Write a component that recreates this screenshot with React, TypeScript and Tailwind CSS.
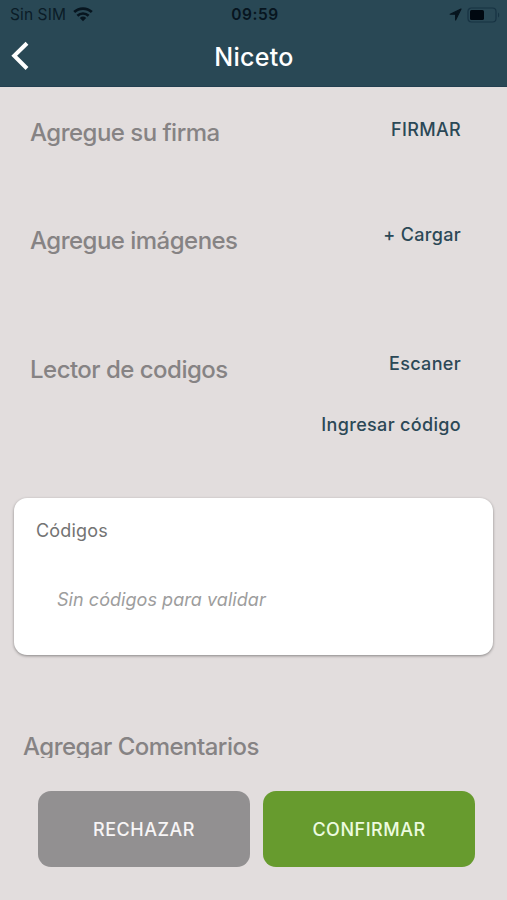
import React from "react";

function StatusBar() {
  return (
    <div className="grid h-[29px] grid-cols-3 items-center pl-[10px] pr-[7px] text-[#07151f]">
      <div className="flex items-center gap-[7px]">
        <span className="text-[15.5px] leading-[29px] tracking-[0.1px] text-[#0b1c27]">Sin SIM</span>
        <svg width="20" height="15" viewBox="0 0 20 15" fill="none" stroke="currentColor">
          <path d="M1.2 5.1a12.8 12.8 0 0 1 17.6 0" strokeWidth="2.7" />
          <path d="M4.4 8.7a8.1 8.1 0 0 1 11.2 0" strokeWidth="2.6" />
          <path d="M10 14.3 6.8 11.1a4.7 4.7 0 0 1 6.4 0Z" fill="currentColor" stroke="none" />
        </svg>
      </div>
      <span className="text-center text-[15.5px] font-semibold leading-[29px] tracking-[0.5px]">09:59</span>
      <div className="flex items-center justify-end gap-[5px]">
        <svg width="13" height="13" viewBox="0 0 13 13" fill="currentColor" stroke="currentColor" strokeLinejoin="round">
          <path d="M12 1 1.2 6.2h5.4v5.8Z" strokeWidth="1.2" />
        </svg>
        <svg width="33" height="16" viewBox="0 0 33 16">
          <rect x="1" y="1" width="28" height="14" rx="3.5" fill="none" stroke="#173343" strokeWidth="1.2" />
          <rect x="3" y="3" width="14" height="10" rx="1.6" fill="#000810" />
          <path d="M31 5.5c1.6.8 1.6 4.2 0 5Z" fill="#173343" />
        </svg>
      </div>
    </div>
  );
}

function Action({ children, className = "" }: { children: React.ReactNode; className?: string }) {
  return (
    <button
      className={`block text-[18px] font-medium leading-[24px] tracking-[0.33px] text-[#2b4856] ${className}`}
    >
      {children}
    </button>
  );
}

function Label({ children, className = "" }: { children: React.ReactNode; className?: string }) {
  return (
    <h2
      className={`whitespace-nowrap text-[24px] font-medium leading-[30px] tracking-[-0.52px] text-[#868384] ${className}`}
    >
      {children}
    </h2>
  );
}

export default function App() {
  return (
    <div className="flex h-[900px] w-[507px] flex-col overflow-hidden bg-[#e2dddd] font-['Inter',sans-serif]">
      <header className="h-[87px] shrink-0 border-b border-[#233f50] bg-[#294855]">
        <StatusBar />
        <div className="grid h-[57px] grid-cols-[1fr_auto_1fr] items-center pl-[11px] pr-[10px]">
          <button aria-label="Volver" className="mb-[4px] w-fit">
            <svg width="18" height="30" viewBox="0 0 18 30" fill="none" stroke="#fff" strokeWidth="4">
              <path d="M16 2.2 3.2 14.7 16 27.5" />
            </svg>
          </button>
          <h1 className="text-[25px] font-medium leading-[57px] tracking-[0.3px] text-white">Niceto</h1>
        </div>
      </header>

      <main className="flex flex-col">
        <section className="flex h-[108px] items-start justify-between pl-[30px] pr-[46px] pt-[31px]">
          <Label>Agregue su firma</Label>
          <Action>FIRMAR</Action>
        </section>
        <section className="flex h-[129px] items-start justify-between pl-[30px] pr-[46px] pt-[31px]">
          <Label>Agregue imágenes</Label>
          <Action className="-mt-[3px]">+ Cargar</Action>
        </section>
        <section className="flex h-[174px] items-start justify-between pl-[30px] pr-[46px] pt-[28px]">
          <Label className="mt-[3px]">Lector de codigos</Label>
          <div className="flex flex-col items-end gap-[37px]">
            <Action>Escaner</Action>
            <Action>Ingresar código</Action>
          </div>
        </section>
        <section className="mx-[14px] h-[157px] rounded-[13px] bg-white pl-[22px] pt-[21px] shadow-[0_1px_3px_rgba(0,0,0,0.4)]">
          <h3 className="text-[18px] leading-[24px] tracking-[0.2px] text-[#737373]">Códigos</h3>
          <p className="ml-[21px] mt-[45px] text-[18px] italic leading-[24px] tracking-[0.05px] text-[#9d9d9d]">
            Sin códigos para validar
          </p>
        </section>
        <section className="mt-[77px] h-[26px] overflow-hidden pl-[23px]">
          <Label>Agregar Comentarios</Label>
        </section>
      </main>

      <footer className="mt-[33px] flex gap-[13px] pl-[38px] pr-[32px] text-[18px] font-medium tracking-[0.5px]">
        <button className="h-[76px] flex-1 rounded-[13px] bg-[#929091] text-[#f7f5f6]">RECHAZAR</button>
        <button className="h-[76px] flex-1 rounded-[13px] bg-[#679b2e] text-[#edfbe0]">CONFIRMAR</button>
      </footer>
    </div>
  );
}
